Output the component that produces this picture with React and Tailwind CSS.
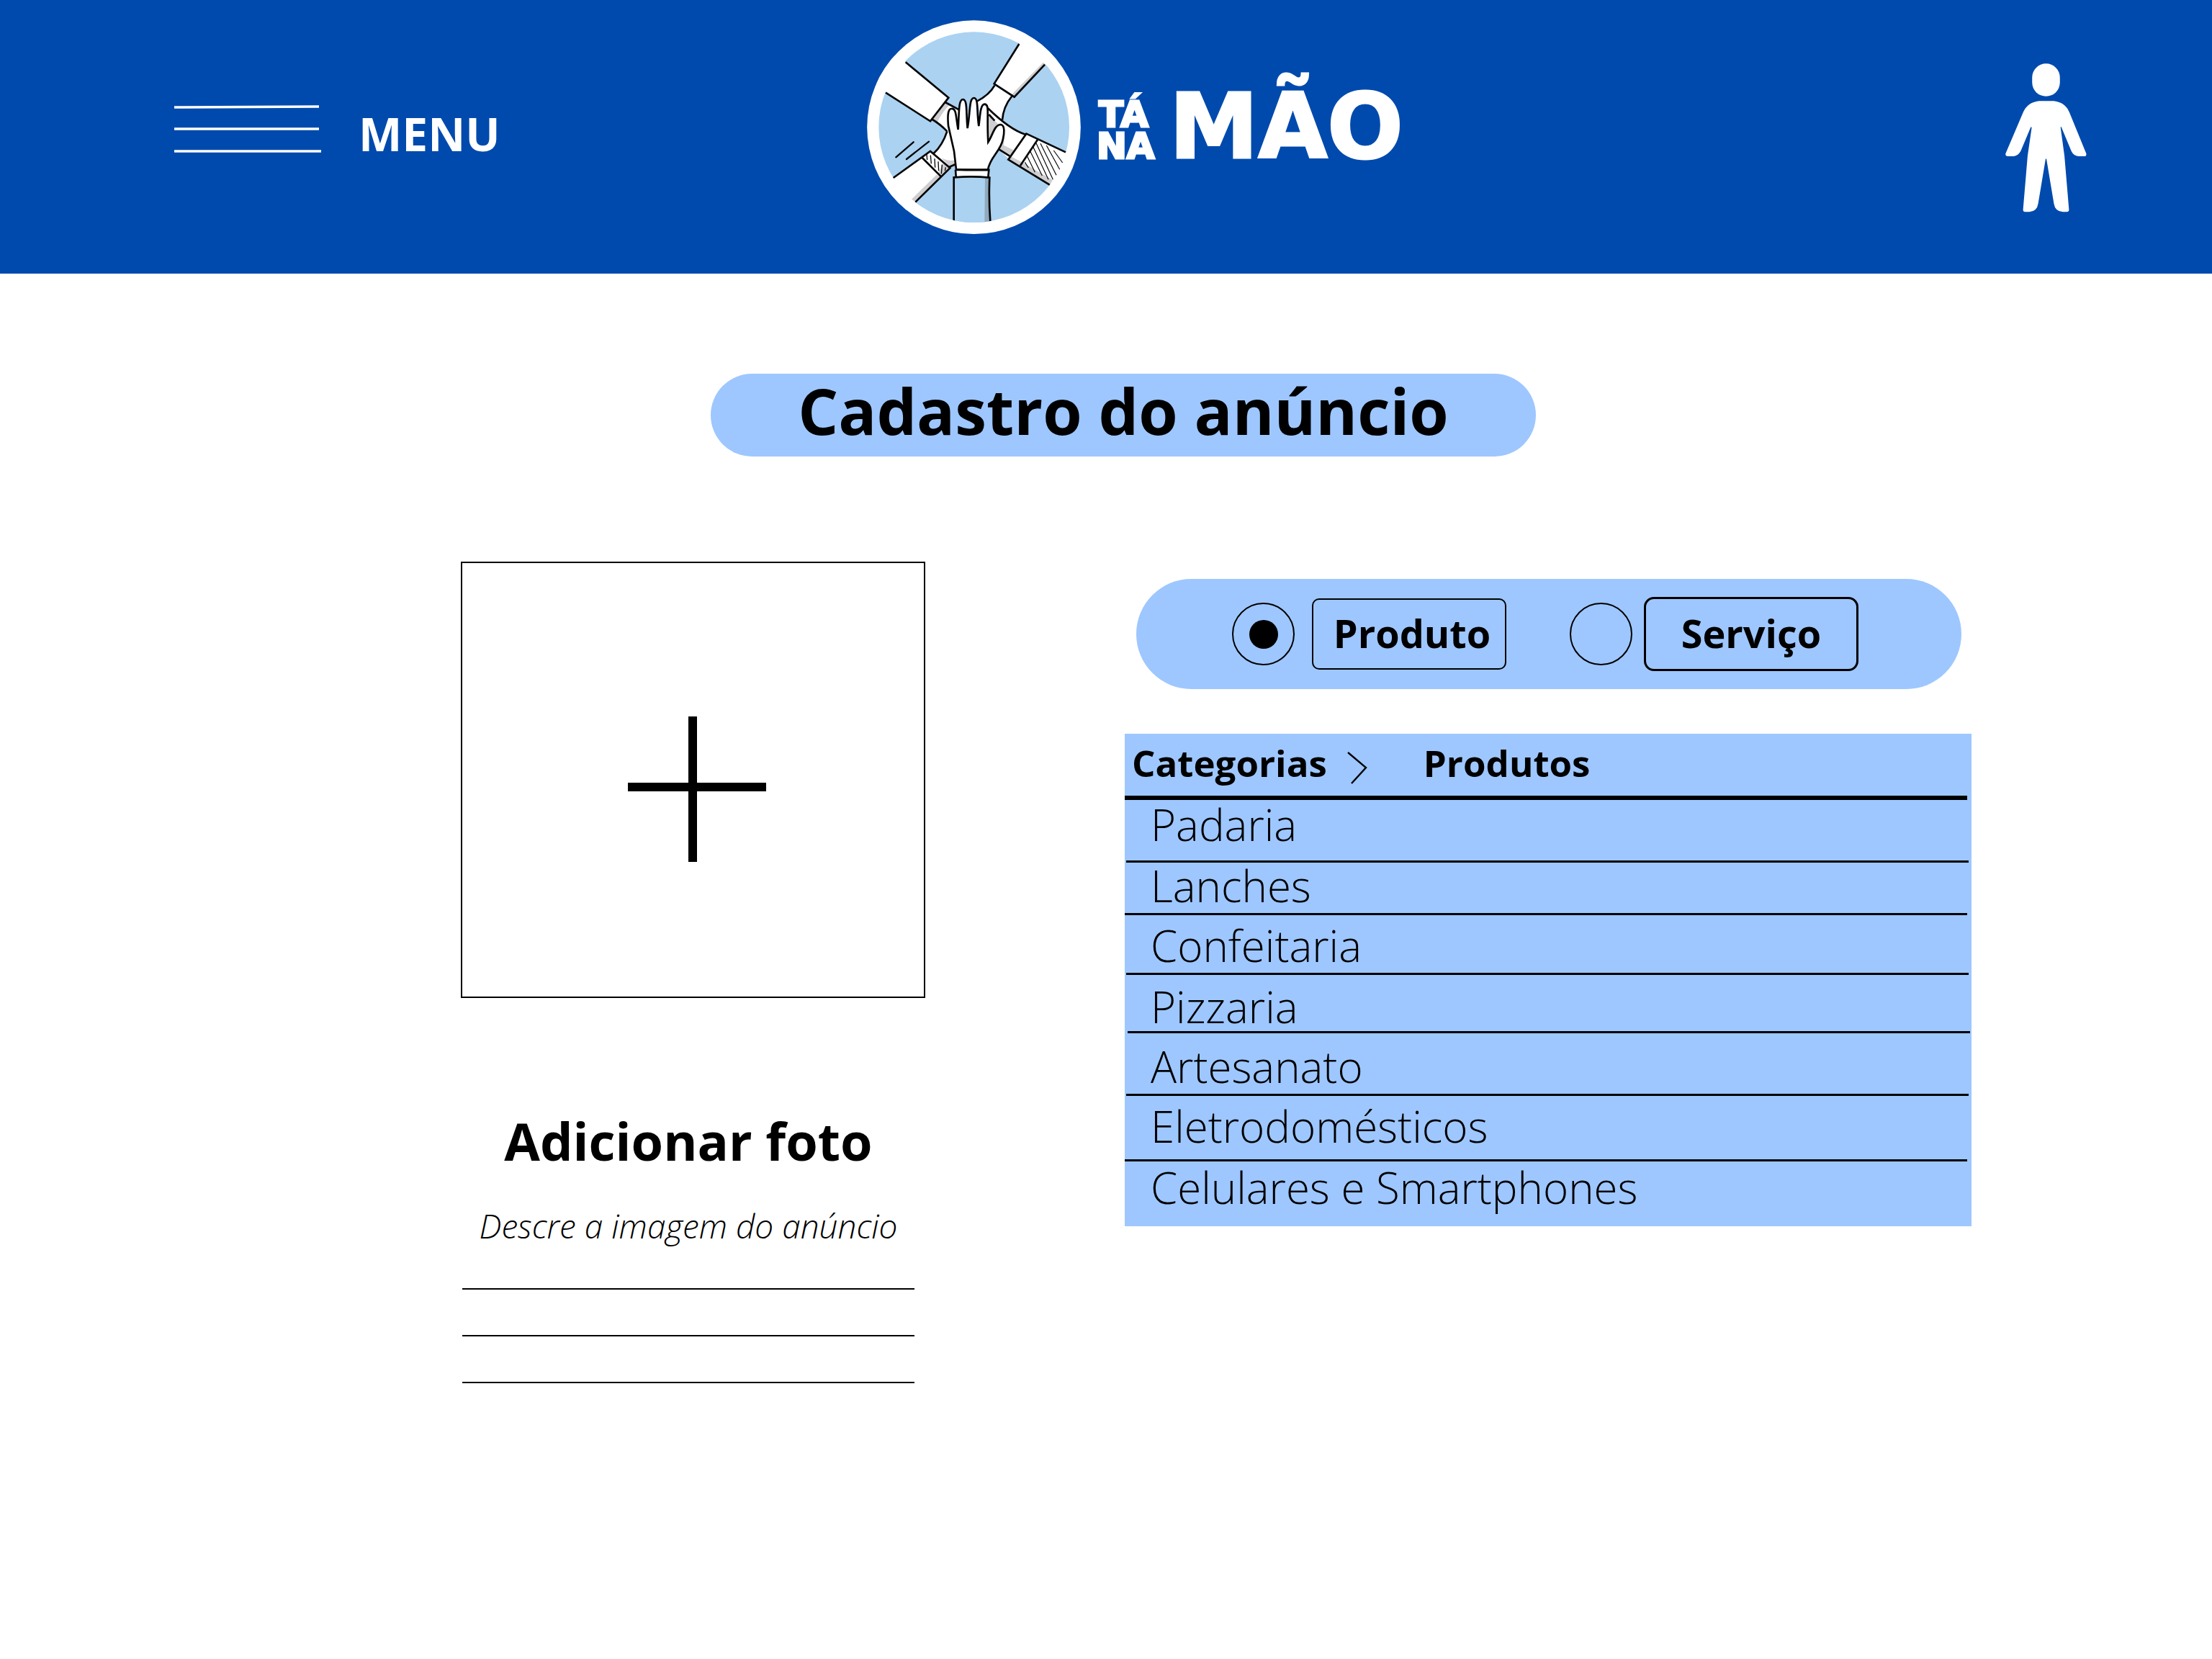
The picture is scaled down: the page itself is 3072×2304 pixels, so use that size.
import React, { useState } from "react";

const categories = [
  { name: "Padaria", row: "pt-1 pb-5", line: "ml-[2px] mr-1" },
  { name: "Lanches", row: "pt-[2px] pb-2", line: "mr-[6px]" },
  { name: "Confeitaria", row: "pt-3 pb-2", line: "ml-[2px] mr-1" },
  { name: "Pizzaria", row: "pt-[14px] pb-1", line: "ml-1 mr-[2px]" },
  { name: "Artesanato", row: "pt-4 pb-2", line: "ml-[2px] mr-1" },
  { name: "Eletrodomésticos", row: "pt-3 pb-4", line: "mr-[6px]" },
  { name: "Celulares e Smartphones", row: "pt-[6px] pb-6", line: null },
];

function MenuIcon() {
  return (
    <svg className="h-20 w-[204px]" viewBox="0 0 204 80" stroke="#fff" strokeWidth="3.4" aria-hidden="true">
      <path d="M0 3L201 2M0 33H201M0 64H204" />
    </svg>
  );
}

function HandsLogo() {
  return (
    <svg className="h-[297px] w-[297px] shrink-0" viewBox="40 54 891 891" role="img" aria-label="Mãos unidas">
      <defs>
        <clipPath id="rim">
          <circle cx="485.5" cy="500" r="445" />
        </clipPath>
        <clipPath id="disc">
          <circle cx="486" cy="500" r="397" />
        </clipPath>
      </defs>
      <circle cx="485.5" cy="500" r="445" fill="#fff" />
      <circle cx="486" cy="500" r="397" fill="#abd2f1" />
      <g strokeLinejoin="miter" clipPath="url(#rim)">
        {/* arm, top left */}
        <path d="M201 229L120 180L60 300L118 356L304 474L378 377Z" fill="#fff" />
        <path d="M304 468Q345 488 374 517L440 540L440 440L366 396Z" fill="#fff" />
        <path d="M309 463L366 400L384 407Q355 435 334 477Z" fill="#cfcfd1" />
        <path d="M201 229L380 377L304 475L118 356M366 396L425 428M308 465Q345 487 374 517" fill="none" stroke="#050505" strokeWidth="8" />
        {/* arm, top right */}
        <path d="M674 153L800 110L840 210L781 239L654 374L570 319Z" fill="#fff" />
        <path d="M774 230L786 240L655 375L640 367Z" fill="#cfcfd1" />
        <path d="M572 326Q550 365 500 391L520 480L604 470Q608 410 643 372Z" fill="#fff" />
        <path d="M674 153L570 319L654 374L781 239M572 326Q550 365 500 391M643 372Q608 415 604 470" fill="none" stroke="#050505" strokeWidth="8" />
        {/* arm, right */}
        <path d="M543 420Q635 508 700 530L632 632L590 594L530 580Z" fill="#fff" />
        <path d="M547 445L570 470L590 490L545 560Z" fill="#cfcfd1" />
        <path d="M614 530L610 575L650 595L638 625L590 594Z" fill="#cfcfd1" />
        <path d="M704 527L868 604L900 640L840 750L801 740L629 635Z" fill="#fff" />
        <path d="M637 620L690 648L814 720L801 743L629 635Z" fill="#cfcfd1" />
        <path d="M543 420Q635 510 700 530M868 604L704 527L629 635L801 740M751 552L679 660M590 592L634 620M548 447L572 473" fill="none" stroke="#050505" strokeWidth="8" />
        <path d="M698 646L713 669M708 622L740 688M719 598L770 702M731 579L796 718M745 566L815 718M763 568L829 700M788 576L843 676M818 597L855 648" fill="none" stroke="#050505" strokeWidth="3.5" />
        {/* arm, bottom left */}
        <path d="M374 517Q355 575 318 609L386 665L420 650L430 520Z" fill="#fff" />
        <path d="M350 628Q380 645 412 635L410 655L386 666Z" fill="#cfcfd1" />
        <path d="M304 600L386 670L242 811L190 860L110 740L150 710Z" fill="#fff" />
        <path d="M330 698L350 708L244 812L226 800Z" fill="#cfcfd1" />
        <path d="M360 645L386 670L349 706L338 690Z" fill="#cfcfd1" />
        <path d="M374 517Q355 575 318 609M384 665L410 654M150 711L304 600L386 670L242 812M270 627L349 706" fill="none" stroke="#050505" strokeWidth="8" />
        <path d="M289 612L291 636M305 617L308 652M322 631L324 668M337 643L339 682M353 656L350 694M368 667L365 682" fill="none" stroke="#050505" strokeWidth="4" />
        <path d="M161 625L234 562M205 633L298 560" fill="none" stroke="#050505" strokeWidth="7" strokeLinecap="round" />
        {/* hand, centre */}
        <path d="M412 677L403 600L379 494C375 450 378 423 392 423C414 420 410 460 420 510C424 440 421 384 440 384C460 386 452 440 459 504C471 440 465 378 486 378C506 380 496 430 506 495C512 450 512 404 531 404C552 408 538 440 545 562C566 530 570 490 598 489C617 492 611 530 607 548C598 600 552 625 544 677Z" fill="#fff" stroke="#050505" strokeWidth="8" />
        <path d="M409 677Q480 680 548 678L546 708Q480 700 410 707Z" fill="#fff" />
        <g clipPath="url(#disc)">
          <path d="M402 709Q480 703 551 710L551 900H402Z" fill="#abd2f1" />
          <path d="M532 709L551 710L554 900H530Z" fill="#8fa9bd" />
          <path d="M409 677Q480 680 548 678L545 708M409 677L411 706M402 895V709Q480 703 551 710Q547 800 554 895" fill="none" stroke="#050505" strokeWidth="8" />
        </g>
      </g>
    </svg>
  );
}

function Wordmark() {
  return (
    <svg
      className="h-[190px] w-[438px] overflow-visible font-['DejaVu_Sans',sans-serif] font-bold"
      viewBox="0 -30 438 190"
      fill="#fff"
      stroke="#fff"
      strokeLinejoin="miter"
      role="img"
      aria-label="Tá na mão"
    >
      <text x="1" y="64" fontSize="50" strokeWidth="3">TÁ</text>
      <text x="-2" y="108" fontSize="50" strokeWidth="3">NA</text>
      <text x="99" y="107" fontSize="124" strokeWidth="3">MÃO</text>
    </svg>
  );
}

function PersonIcon() {
  return (
    <svg className="h-[207px] w-[113px]" viewBox="135 84 340 621" fill="#fff" aria-hidden="true">
      <rect x="247" y="84" width="116" height="137" rx="58" />
      <path d="M275 240H338Q385 246 402 286L473 460Q475 471 465 471H440Q420 469 411 450L369 349Q366 346 366 352L382 470L401 695Q401 704 391 704H375Q343 702 338 670L307 484Q305 478 303 484L272 670Q267 702 235 704H218Q209 704 209 695L228 470L245 352Q244 346 241 350L199 450Q188 469 170 471H146Q134 471 136 460L210 286Q228 246 275 240Z" />
    </svg>
  );
}

function Option({ value, label, checked, onChange, box, group }) {
  return (
    <label className={"flex items-center " + group}>
      <input
        type="radio"
        name="tipo"
        value={value}
        checked={checked}
        onChange={onChange}
        className="peer sr-only"
      />
      <span className="flex h-[87px] w-[87px] items-center justify-center rounded-full border-2 border-black">
        {checked && <span className="h-10 w-10 rounded-full bg-black" />}
      </span>
      <span className={"flex items-center justify-center border-black pb-1 text-[54px] leading-[72px] font-bold " + box}>
        {label}
      </span>
    </label>
  );
}

export default function App() {
  const [kind, setKind] = useState("produto");
  return (
    <div className="min-h-screen bg-white font-['Open_Sans',sans-serif] text-black">
      <header className="grid h-[380px] grid-cols-[1fr_auto_1fr] items-start bg-[#004aad] text-white">
        <button type="button" className="mt-[142px] ml-[242px] flex items-center gap-[52px] justify-self-start">
          <MenuIcon />
          <span className="text-[64px] leading-[88px] font-bold">MENU</span>
        </button>
        <a href="#" className="flex items-center gap-6 pt-7 pl-[94px]">
          <HandsLogo />
          <Wordmark />
        </a>
        <button type="button" aria-label="Perfil" className="mt-[88px] mr-[174px] justify-self-end">
          <PersonIcon />
        </button>
      </header>

      <main>
        <div className="flex justify-center pt-[139px] pl-12">
          <h1 className="flex h-[115px] w-[1146px] items-center justify-center rounded-full bg-[#9ec7ff] pb-[14px] text-[88px] leading-[100px] font-bold">
            Cadastro do anúncio
          </h1>
        </div>

        <div className="mt-[146px] mr-[334px] ml-[640px] flex items-start justify-between">
          <section className="flex w-[645px] flex-col">
            <button
              type="button"
              aria-label="Adicionar foto"
              className="flex h-[606px] items-center justify-center border-2 border-black pt-[26px] pl-[10px]"
            >
              <svg className="h-[202px] w-[192px]" viewBox="0 0 192 202" stroke="#000" strokeWidth="12" aria-hidden="true">
                <path d="M90 0V202M0 98H192" />
              </svg>
            </button>
            <div className="ml-[2px] flex w-[628px] flex-col text-center">
              <h2 className="mt-[148px] text-[72px] leading-[100px] font-bold">Adicionar foto</h2>
              <label htmlFor="descricao" className="mt-11 text-[46px] leading-[48px] font-light italic">
                Descre a imagem do anúncio
              </label>
              <textarea
                id="descricao"
                rows={3}
                className="h-[195px] resize-none bg-[repeating-linear-gradient(to_bottom,transparent_0,transparent_63px,black_63px,black_65px)] text-[46px] leading-[65px] outline-none"
              />
            </div>
          </section>

          <section className="mt-6 flex w-[1176px] flex-col">
            <div
              role="radiogroup"
              aria-label="Tipo de anúncio"
              className="ml-4 flex h-[153px] w-[1146px] items-center justify-center gap-[88px] rounded-full bg-[#9ec7ff] pr-[10px]"
            >
              <Option
                value="produto"
                label="Produto"
                checked={kind === "produto"}
                onChange={() => setKind("produto")}
                group="gap-6"
                box="h-[99px] w-[270px] rounded-[10px] border-2 pl-2"
              />
              <Option
                value="servico"
                label="Serviço"
                checked={kind === "servico"}
                onChange={() => setKind("servico")}
                group="gap-4"
                box="h-[103px] w-[298px] rounded-[14px] border-[3px]"
              />
            </div>

            <div className="mt-[62px] bg-[#9ec7ff]">
              <nav
                className="mr-[6px] flex h-[92px] items-center border-b-[6px] border-black pb-[6px] pl-[10px] text-[51px] leading-[70px] font-bold"
                aria-label="Categorias"
              >
                <a href="#">Categorias</a>
                <svg className="mt-4 ml-7 h-[46px] w-7" viewBox="0 0 28 46" fill="none" stroke="#000" strokeWidth="2.4" aria-hidden="true">
                  <path d="M1 1L26 22L6 44" />
                </svg>
                <a href="#" className="ml-[78px]">Produtos</a>
              </nav>
              <ul>
                {categories.map(({ name, row, line }) => (
                  <li key={name}>
                    <a href="#" className={"block pl-9 text-[60px] leading-[60px] font-light " + row}>
                      {name}
                    </a>
                    {line !== null && <div className={"h-[3px] bg-black " + line} />}
                  </li>
                ))}
              </ul>
            </div>
          </section>
        </div>
      </main>
    </div>
  );
}
